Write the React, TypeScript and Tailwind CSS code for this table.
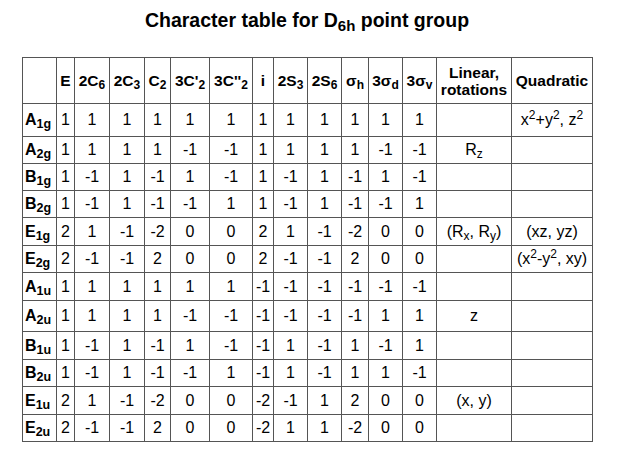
import React from "react";

const cols = [34, 18, 35, 35, 26, 39, 43, 21, 34, 34, 27, 34, 34, 75, 81];

type Row = {
  l: string;
  s: string;
  v: string[];
  lin?: React.ReactNode;
  quad?: React.ReactNode;
  h: number;
};

const Sup = ({ c }: { c: string }) => <sup className="text-[12px]">{c}</sup>;
const Sb = ({ c }: { c: string }) => <sub className="text-[12px]">{c}</sub>;

const rows: Row[] = [
  { l: "A", s: "1g", v: "1 1 1 1 1 1 1 1 1 1 1 1".split(" "), h: 33, quad: <>x<Sup c="2" />+y<Sup c="2" />, z<Sup c="2" /></> },
  { l: "A", s: "2g", v: "1 1 1 1 -1 -1 1 1 1 1 -1 -1".split(" "), h: 27, lin: <>R<Sb c="z" /></> },
  { l: "B", s: "1g", v: "1 -1 1 -1 1 -1 1 -1 1 -1 1 -1".split(" "), h: 27 },
  { l: "B", s: "2g", v: "1 -1 1 -1 -1 1 1 -1 1 -1 -1 1".split(" "), h: 27 },
  { l: "E", s: "1g", v: "2 1 -1 -2 0 0 2 1 -1 -2 0 0".split(" "), h: 28, lin: <>(R<Sb c="x" />, R<Sb c="y" />)</>, quad: "(xz, yz)" },
  { l: "E", s: "2g", v: "2 -1 -1 2 0 0 2 -1 -1 2 0 0".split(" "), h: 27, quad: <>(x<Sup c="2" />-y<Sup c="2" />, xy)</> },
  { l: "A", s: "1u", v: "1 1 1 1 1 1 -1 -1 -1 -1 -1 -1".split(" "), h: 28 },
  { l: "A", s: "2u", v: "1 1 1 1 -1 -1 -1 -1 -1 -1 1 1".split(" "), h: 31, lin: "z" },
  { l: "B", s: "1u", v: "1 -1 1 -1 1 -1 -1 1 -1 1 -1 1".split(" "), h: 28 },
  { l: "B", s: "2u", v: "1 -1 1 -1 -1 1 -1 1 -1 1 1 -1".split(" "), h: 27 },
  { l: "E", s: "1u", v: "2 1 -1 -2 0 0 -2 -1 1 2 0 0".split(" "), h: 28, lin: "(x, y)" },
  { l: "E", s: "2u", v: "2 -1 -1 2 0 0 -2 1 1 -2 0 0".split(" "), h: 27 },
];

const HSub = ({ c }: { c: string }) => <sub className="text-[12px]">{c}</sub>;

const headers: React.ReactNode[] = [
  "E",
  <>2C<HSub c="6" /></>,
  <>2C<HSub c="3" /></>,
  <>C<HSub c="2" /></>,
  <>3C'<HSub c="2" /></>,
  <>3C''<HSub c="2" /></>,
  "i",
  <>2S<HSub c="3" /></>,
  <>2S<HSub c="6" /></>,
  <>σ<HSub c="h" /></>,
  <>3σ<HSub c="d" /></>,
  <>3σ<HSub c="v" /></>,
];

export default function App() {
  const bd = "border border-[#555555]";
  return (
    <div
      className="w-[617px] h-[457px] bg-white text-black"
      style={{ fontFamily: '"Liberation Sans", Arial, sans-serif' }}
    >
      <div className="ml-[22px] w-[570px]">
        <div className="h-[57px] pt-[9px] text-center text-[19.5px] font-bold leading-[22px]">
          Character table for D<sub className="text-[15px]">6h</sub> point group
        </div>
        <table className="table-fixed border-collapse w-[570px]">
          <colgroup>
            {cols.map((w, i) => (
              <col key={i} style={{ width: w }} />
            ))}
          </colgroup>
          <thead>
            <tr className="h-[46px]">
              <th className={bd}></th>
              {headers.map((h, i) => (
                <th key={i} className={`${bd} p-0 text-center text-[15.5px] font-bold leading-[18px] whitespace-nowrap`}>
                  {h}
                </th>
              ))}
              <th className={`${bd} p-0 text-center text-[15.5px] font-bold leading-[17px]`}>
                Linear,
                <br />
                rotations
              </th>
              <th className={`${bd} p-0 text-center text-[15.5px] font-bold leading-[18px]`}>Quadratic</th>
            </tr>
          </thead>
          <tbody>
            {rows.map((r, ri) => (
              <tr key={ri} style={{ height: r.h }}>
                <td className={`${bd} p-0 pl-[2px] text-left text-[16px] font-bold leading-[18px] whitespace-nowrap`}>
                  {r.l}
                  <sub className="text-[12.5px]">{r.s}</sub>
                </td>
                {r.v.map((v, vi) => (
                  <td key={vi} className={`${bd} p-0 text-center text-[16px] leading-[18px] whitespace-nowrap`}>
                    {v}
                  </td>
                ))}
                <td className={`${bd} p-0 text-center text-[16px] leading-[18px] whitespace-nowrap`}>{r.lin}</td>
                <td className={`${bd} p-0 text-center text-[16px] leading-[18px] whitespace-nowrap`}>{r.quad}</td>
              </tr>
            ))}
          </tbody>
        </table>
      </div>
    </div>
  );
}
